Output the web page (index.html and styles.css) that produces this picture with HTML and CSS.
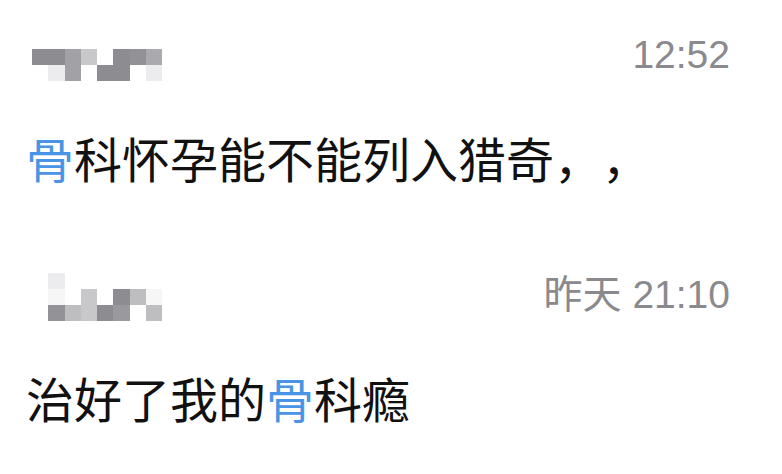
FILE: index.html
```html
<!DOCTYPE html>
<html lang="zh-CN">
<head>
<meta charset="utf-8">
<title>评论</title>
<link rel="stylesheet" href="styles.css">
</head>
<body>
<div class="list">
  <div class="item item-first">
    <div class="head">
      <div class="avatar-name">
        <i></i><i></i><i></i><i></i><i></i><i></i><i></i><i></i>
        <i class="d"></i><i class="d"></i><i class="m"></i><i class="l"></i><i></i><i class="d"></i><i class="d2"></i><i class="m2"></i>
        <i></i><i class="v"></i><i class="m"></i><i></i><i class="d"></i><i class="d"></i><i></i><i class="v"></i>
      </div>
      <div class="time">12:52</div>
    </div>
    <div class="text"><span class="hl">骨</span>科怀孕能不能列入猎奇，，</div>
  </div>
  <div class="item item-second">
    <div class="head">
      <div class="avatar-name">
        <i></i><i class="v"></i><i></i><i></i><i></i><i></i><i></i><i></i>
        <i></i><i class="f"></i><i></i><i class="l"></i><i></i><i class="d"></i><i class="lm"></i><i class="f"></i>
        <i></i><i class="dm"></i><i class="lm"></i><i class="l"></i><i class="d"></i><i class="md"></i><i></i><i class="lm"></i>
      </div>
      <div class="time">昨天 21:10</div>
    </div>
    <div class="text">治好了我的<span class="hl">骨</span>科瘾</div>
  </div>
</div>
</body>
</html>
```

FILE: styles.css
```css
html, body {
  margin: 0;
  padding: 0;
  background: #ffffff;
}

body {
  width: 782px;
  height: 474px;
  overflow: hidden;
  font-family: "Noto Sans CJK SC", "Noto Sans", sans-serif;
}

.list {
  display: flex;
  flex-direction: column;
}

.item {
  display: flex;
  flex-direction: column;
  padding: 0 52px 0 26px;
}

.item-first {
  padding-top: 33px;
}

.item-second {
  padding-top: 88px;
}

.head {
  display: flex;
  justify-content: space-between;
  align-items: flex-start;
}

.avatar-name {
  margin-left: 6px;
  display: grid;
  grid-template-columns: repeat(8, 16.3px);
  grid-template-rows: repeat(3, 16px);
}

.avatar-name i { display: block; }
.avatar-name .d { background: #8d8d91; }
.avatar-name .d2 { background: #929296; }
.avatar-name .dm { background: #939397; }
.avatar-name .md { background: #9a9a9e; }
.avatar-name .m { background: #a2a2a6; }
.avatar-name .m2 { background: #aaaaae; }
.avatar-name .lm { background: #bebec1; }
.avatar-name .l { background: #c8c8cb; }
.avatar-name .v { background: #ececee; }
.avatar-name .f { background: #f6f6f7; }

.time {
  font-family: "Liberation Sans", "Noto Sans CJK SC", sans-serif;
  font-size: 39px;
  line-height: 44px;
  color: #8a8a8e;
  margin-top: 0;
}

.text {
  margin-top: 48px;
  font-size: 48px;
  line-height: 56px;
  color: #111111;
  white-space: nowrap;
  text-spacing-trim: space-all;
  font-feature-settings: "fwid" 1;
}

.hl {
  color: #4a94e6;
}
```
